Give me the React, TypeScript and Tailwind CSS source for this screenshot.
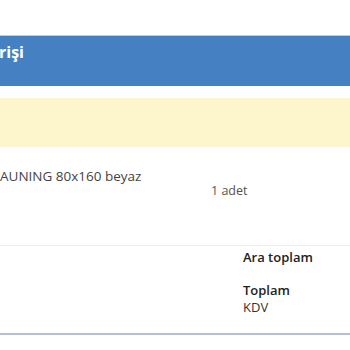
export default function App() {
  return (
    <div className="w-[350px] h-[350px] overflow-hidden bg-white font-['Open_Sans',sans-serif]">
      <div className="pt-[35px]">
        {/* panel header */}
        <div className="h-[51px] border-t border-[#b5cdea] bg-[#4581c2] pt-[6px]">
          <span className="-ml-[1px] block text-[16px] leading-[20px] font-bold text-white">rişi</span>
        </div>

        {/* notice */}
        <div className="mt-[12px] h-[49px] bg-[#fdf6cc] border-b border-[#fcf3d2]" />

        {/* order line */}
        <div className="pt-[21px] h-[99px] border-b border-[#eeeeee]">
          <div className="text-[13.5px] leading-[16px] text-[#444]">AUNING 80x160 beyaz</div>
          <div className="pl-[211px] -mt-[1px] text-[12.5px] leading-[16px] text-[#555]">1 adet</div>
        </div>

        {/* totals */}
        <div className="h-[89px] border-b-2 border-[#b2bedb] pl-[243px] pt-[3px] text-[13px] leading-[16px] text-[#222]">
          <div className="font-semibold">Ara toplam</div>
          <div className="mt-[17px] font-semibold">Toplam</div>
          <div className="mt-[1px] text-[#333]">KDV</div>
        </div>
      </div>
    </div>
  )
}
